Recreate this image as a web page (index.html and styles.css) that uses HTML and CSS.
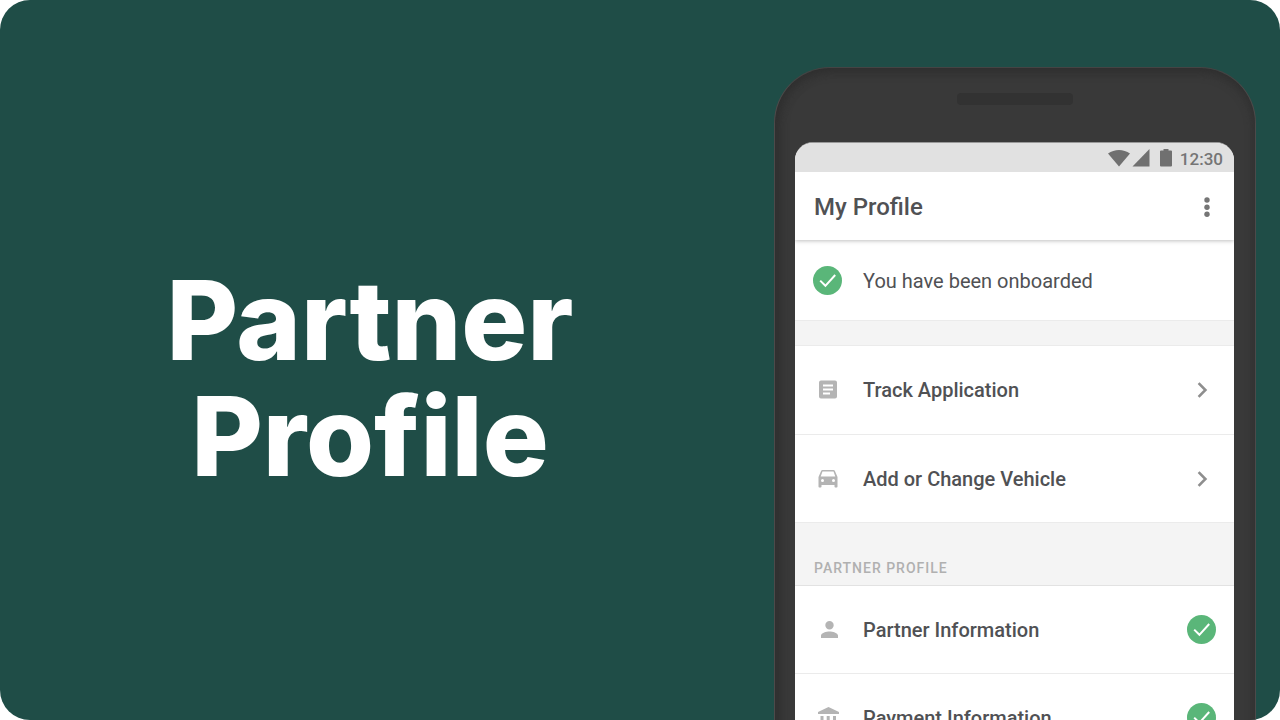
FILE: index.html
```html
<!DOCTYPE html>
<html lang="en">
<head>
<meta charset="utf-8">
<meta name="viewport" content="width=device-width, initial-scale=1">
<title>Partner Profile</title>
<link rel="stylesheet" href="styles.css">
</head>
<body>
<svg class="defs" aria-hidden="true">
  <symbol id="check" viewBox="0 0 29 29"><circle cx="14.5" cy="14.5" r="14.5" fill="#5ab679"/><path d="M7.2 14.600l5.200 5.200L22.2 9" fill="none" stroke="#fff" stroke-width="2"/></symbol>
  <symbol id="chevron" viewBox="0 0 24 24"><path d="M8.6 5.2l6.8 6.8-6.8 6.8" fill="none" stroke="#8e8e8e" stroke-width="2.600"/></symbol>
</svg>
<main class="stage">
  <section class="hero">
    <h1 class="hero-title">Partner Profile</h1>
  </section>
  <section class="phone" aria-label="My Profile">
    <div class="speaker"></div>
    <div class="screen">
      <div class="status">
        <svg class="status-icons" viewBox="0 0 66 20" aria-hidden="true">
          <path d="M0 4.6C6.500-.2 15.500-.2 22 4.600L11 17.500z"/>
          <path d="M41.500 0v17.500H24.500z"/>
          <path d="M55.500 0h5v1.500H63a1 1 0 0 1 1 1v14a1 1 0 0 1-1 1H53a1 1 0 0 1-1-1v-14a1 1 0 0 1 1-1h2.500z"/>
        </svg>
        <span>12:30</span>
      </div>
      <header class="appbar">
        <h2 class="appbar-title">My Profile</h2>
        <button class="more" aria-label="More options">
          <svg class="more-icon" viewBox="0 0 6 20" aria-hidden="true"><circle cx="3" cy="3" r="2.700"/><circle cx="3" cy="10.200" r="2.700"/><circle cx="3" cy="17.300" r="2.700"/></svg>
        </button>
      </header>
      <p class="row notice"><svg class="badge"><use href="#check"/></svg><span class="label">You have been onboarded</span></p>
      <nav class="group">
        <a class="row" href="#track">
          <svg class="icon" viewBox="0 0 24 24"><path d="M19 2.500H5a2 2 0 0 0-2 2v14a2 2 0 0 0 2 2h14a2 2 0 0 0 2-2v-14a2 2 0 0 0-2-2zm-5 14H7v-2h7zm3-4H7v-2h10zm0-4H7v-2h10z"/></svg>
          <span class="label">Track Application</span>
          <svg class="chevron"><use href="#chevron"/></svg>
        </a>
        <a class="row" href="#vehicle">
          <svg class="icon" viewBox="0 0 24 24"><path d="M18.920 4.010C18.720 3.420 18.160 3 17.500 3h-11c-.66 0-1.210.42-1.420 1.010L2.500 10v9.500c0 .55.45 1 1 1h1c.55 0 1-.45 1-1V18h13v1.500c0 .55.45 1 1 1h1c.55 0 1-.45 1-1V10zM6.500 15a1.500 1.500 0 1 1 0-3 1.500 1.500 0 0 1 0 3zm11 0a1.500 1.500 0 1 1 0-3 1.500 1.500 0 0 1 0 3zM4.700 9.500l1.800-5h11l1.800 5z"/></svg>
          <span class="label">Add or Change Vehicle</span>
          <svg class="chevron"><use href="#chevron"/></svg>
        </a>
      </nav>
      <h3 class="section-title">PARTNER PROFILE</h3>
      <nav>
        <a class="row" href="#partner">
          <svg class="icon" viewBox="0 0 24 24"><path d="M13.500 11.500a4.200 4.200 0 1 0 0-8.400 4.200 4.200 0 0 0 0 8.400zm0 1.900c-3 0-8.500 1.400-8.500 4.200v2.400h17v-2.400c0-2.800-5.500-4.200-8.500-4.200z"/></svg>
          <span class="label">Partner Information</span>
          <svg class="badge"><use href="#check"/></svg>
        </a>
        <a class="row" href="#payment">
          <svg class="icon" viewBox="0 0 24 24"><path d="M4.500 10v7h3v-7zm6.200 0v7h3v-7zM2 22h21v-3H2zm15-12v7h3v-7zM12.500 1L2 6v2h21V6z"/></svg>
          <span class="label">Payment Information</span>
          <svg class="badge"><use href="#check"/></svg>
        </a>
      </nav>
    </div>
  </section>
</main>
</body>
</html>
```
FILE: styles.css
```css
* { box-sizing: border-box; }
body { margin: 0; background: #fff; font-family: Roboto, sans-serif; }
h1, h2, h3, p { margin: 0; }
.defs { display: none; }
.stage {
  display: grid;
  grid-template-columns: minmax(0, 1fr) 482px;
  grid-template-rows: minmax(0, 1fr);
  gap: 34px;
  height: 100vh;
  padding-right: 24px;
  overflow: hidden;
  border-radius: 30px;
  background: #1f4d47;
}
.hero { display: flex; align-items: center; justify-content: center; padding-top: 36px; }
.hero-title {
  max-width: 480px;
  color: #fff;
  font: 800 110px/116px Inter, sans-serif;
  text-align: center;
}
.phone {
  display: flex;
  flex-direction: column;
  align-self: start;
  margin-top: 67px;
  padding: 25px 21px 80px 20px;
  border: 1px solid #4c4a4a;
  border-top-color: #444;
  border-radius: 56px;
  background: #393939;
  box-shadow: inset 0 4px 10px #2f2f2f, inset 5px 0 8px #323232;
}
.speaker { align-self: center; width: 116px; height: 12px; border-radius: 4px; background: #323232; }
.screen { margin-top: 37px; overflow: hidden; border-top: 1px solid #999; border-radius: 18px 18px 0 0; background: #fff; color: #505154; }
.status {
  position: relative;
  z-index: 1;
  display: flex;
  align-items: center;
  justify-content: flex-end;
  gap: 6px;
  height: 29px;
  padding: 3px 11px 0 0;
  background: #e1e1e1;
  color: #757575;
  font-size: 17px;
  font-weight: 500;
}
.status-icons { width: 66px; height: 20px; fill: #707070; }
.appbar {
  position: relative;
  display: flex;
  align-items: center;
  justify-content: space-between;
  height: 68px;
  padding: 1px 24px 0 19px;
  background: #fff;
  box-shadow: 0 1px 4px #00000040;
}
.appbar-title { font-size: 24px; font-weight: 500; line-height: 32px; }
.more { display: flex; padding: 0; border: 0; background: none; }
.more-icon { width: 6px; height: 20px; fill: #757575; }
.row {
  display: flex;
  align-items: center;
  height: 88px;
  padding: 0 18px;
  border-bottom: 1px solid #ebebeb;
  background: #fff;
  color: #505154;
  font-size: 20px;
  font-weight: 500;
  line-height: 28px;
  text-decoration: none;
}
.notice { height: 81px; padding-top: 1px; font-weight: 400; }
.label { flex: 1; }
.icon { width: 24px; height: 24px; margin: 0 23px 0 3px; fill: #b4b4b4; }
.badge { width: 29px; height: 29px; }
.notice .badge { margin-right: 21px; }
.chevron { width: 24px; height: 24px; margin-right: 2px; }
.group { border-top: 24px solid #f4f4f4; }
.group .row:first-child { height: 90px; border-top: 1px solid #ebebeb; }
.section-title {
  height: 63px;
  padding: 35px 19px 0;
  border-bottom: 1px solid #e2e2e2;
  background: #f4f4f4;
  color: #b0b0b0;
  font-size: 14px;
  font-weight: 500;
  letter-spacing: 1px;
  line-height: 20px;
}
```
